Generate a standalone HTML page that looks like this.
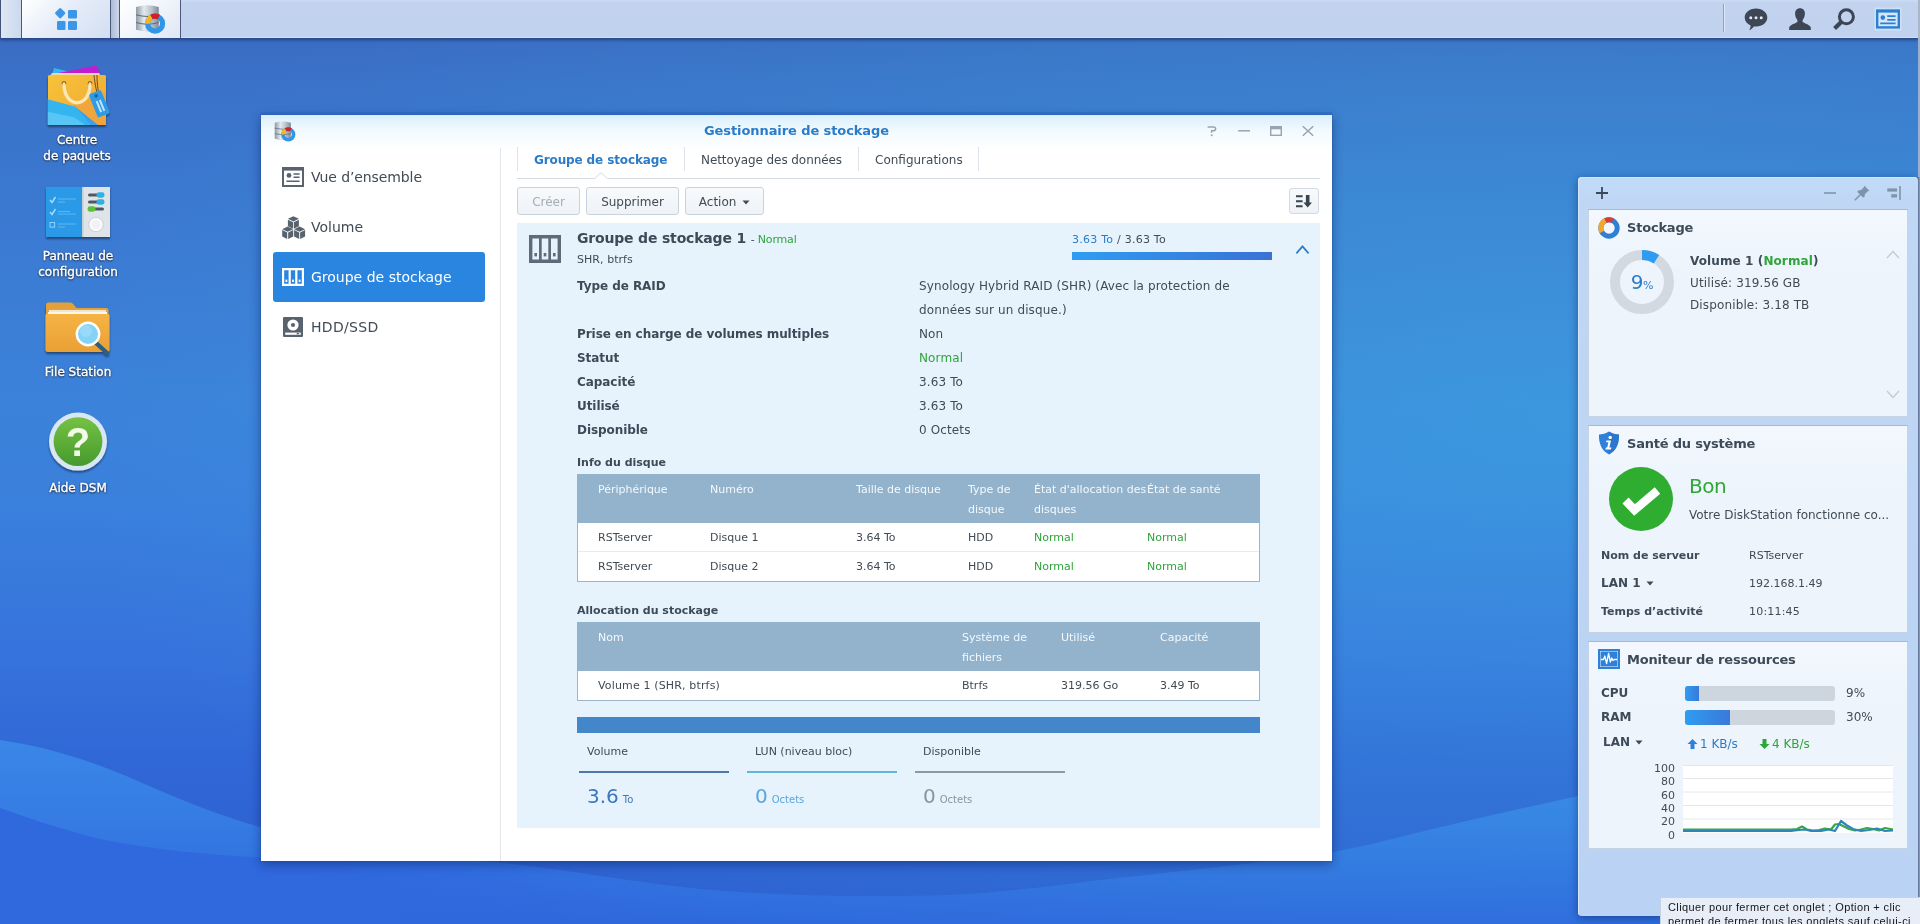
<!DOCTYPE html>
<html lang="fr">
<head>
<meta charset="utf-8">
<title>Synology DiskStation - Gestionnaire de stockage</title>
<style>
*{box-sizing:border-box;margin:0;padding:0}
html,body{width:1920px;height:924px;overflow:hidden}
#win,#wp,.dlabel,#tip{will-change:transform}
body{position:relative;font-family:"DejaVu Sans","Liberation Sans",sans-serif;font-size:12px;color:#414b55;background:#3570d4}
.abs{position:absolute}
#bg{position:absolute;left:0;top:0;width:1920px;height:924px}
/* taskbar */
#taskbar{position:absolute;left:0;top:0;width:1918px;height:39px;background:linear-gradient(#cddcf6 0,#c2d3ee 3px,#c0d2ee 100%);border-bottom:1px solid #2a4a8c;box-shadow:inset 0 -1px 0 #cfe0fa,0 1px 3px rgba(10,30,90,.55)}
#taskbar .tb{position:absolute;top:0;height:38px;border-left:1px solid #4a5a78;border-right:1px solid #4a5a78;background:linear-gradient(135deg,#ffffff 0%,#e6edf8 45%,#d3def2 100%)}
/* desktop icons */
.dlabel{position:absolute;width:140px;text-align:center;color:#fff;font-size:12px;line-height:16px;text-shadow:0 1px 2px rgba(0,0,0,.8),0 0 2px rgba(0,0,0,.55);-webkit-text-stroke:.35px #fff}
/* window */
#win{position:absolute;left:261px;top:115px;width:1071px;height:746px;background:#fff;box-shadow:0 -3px 0 rgba(40,100,190,.55),0 0 0 1px rgba(30,70,150,.25),0 3px 10px rgba(0,20,80,.45)}
#winhead{position:absolute;left:0;top:0;width:100%;height:36px;background:linear-gradient(#d9effc 0%,#f3fafe 45%,#ffffff 100%)}
#wintitle{position:absolute;left:0;top:7px;letter-spacing:-.09px;width:100%;text-align:center;font-weight:bold;font-size:13px;line-height:18px;color:#2b7cc8}
.side{position:absolute;left:12px;width:212px;height:50px;border-radius:3px;font-size:14px;line-height:50px;color:#414b55}
.side span{position:absolute;left:38px;top:0;white-space:nowrap}
.side svg{position:absolute;left:9px;top:14px}
.side.sel{background:#2a85e0;color:#fff}
.tab{position:absolute;top:36px;height:18px;line-height:18px;font-size:12px;white-space:nowrap;color:#414b55}
.tsep{position:absolute;top:32px;width:1px;height:24px;background:#dfe4ea}
.btn{position:absolute;top:72px;height:28px;border:1px solid #c9d3de;border-radius:3px;background:linear-gradient(#f8fafc,#eef2f6);font-size:12px;line-height:26px;padding-top:1px;text-align:center;color:#414b55;white-space:nowrap}
#panel{position:absolute;left:256px;top:108px;width:803px;height:605px;background:#e6f3fd}
.lbl{position:absolute;left:60px;font-weight:bold;font-size:12px;line-height:24px;white-space:nowrap;color:#3d4a58;letter-spacing:-.06px}
.val{position:absolute;left:402px;font-size:12px;line-height:24px;white-space:nowrap;color:#414b55;letter-spacing:.12px}
.green{color:#2fa43a}
.sect{position:absolute;left:60px;font-weight:bold;font-size:11px;line-height:16px;color:#3d4a58;white-space:nowrap}
.tbl{position:absolute;left:60px;width:683px;border:1px solid #9db5c9;background:#fff}
.th{position:absolute;left:-1px;top:-1px;width:683px;height:49px;background:#93b3cd}
.th span{position:absolute;margin-left:1px;top:6px;font-size:11px;line-height:20px;color:#f3f8fc;white-space:nowrap}
.tr{position:absolute;left:0;width:100%;height:29px}
.tr span{position:absolute;top:0;font-size:11px;line-height:29px;color:#414b55;white-space:nowrap}
.tr span.green{color:#2fa43a}
.leg{position:absolute;font-size:11px;line-height:16px;color:#414b55;white-space:nowrap}
.legline{position:absolute;top:663px;width:150px;height:2px}
.big{position:absolute;top:671px;font-size:20px;line-height:30px;white-space:nowrap}
.big small{font-size:10px;margin-left:4px}
/* widget panel */
#wp{position:absolute;left:1578px;top:177px;width:340px;height:739px;background:linear-gradient(#c0dbf8 0,#bfd6f4 30px,#bad2f3 100%);border-radius:4px;box-shadow:inset 1px 1px 0 #d6e6fa,0 2px 8px rgba(0,20,80,.45)}
.card{position:absolute;left:10px;width:320px;background:linear-gradient(#f3f8fe,#edf4fc 60px);border:1px solid #c5d3e3;border-top-color:#a9b8cb}
.ctitle{position:absolute;left:38px;top:9px;letter-spacing:-.2px;font-weight:bold;font-size:13px;line-height:18px;color:#3d4a58;white-space:nowrap}
.wl{position:absolute;font-weight:bold;font-size:11px;line-height:16px;color:#3d4a58;white-space:nowrap}
.wv{position:absolute;font-size:11px;line-height:16px;color:#414b55;white-space:nowrap}
.track{position:absolute;left:96px;width:150px;height:15px;border-radius:3px;background:#cdd5de;overflow:hidden}
.track i{display:block;height:15px;background:linear-gradient(90deg,#2f9cf2,#3a79d9)}
#tip{position:absolute;left:1660px;top:897px;width:262px;height:30px;background:#e7eef8;border:1px solid #c6d1e1;font-family:"Liberation Sans",sans-serif;font-size:11px;line-height:14px;color:#161616;padding:2px 0 0 7px;letter-spacing:.38px;white-space:nowrap}
</style>
</head>
<body>
<svg id="bg" width="1920" height="924" viewBox="0 0 1920 924">
<defs>
<linearGradient id="g0" gradientUnits="userSpaceOnUse" x1="0" y1="0" x2="0" y2="924">
<stop offset="0.041" stop-color="#3a6cc3"/><stop offset="0.092" stop-color="#3a72c9"/><stop offset="0.27" stop-color="#3b7bd3"/><stop offset="0.43" stop-color="#3b82da"/><stop offset="0.54" stop-color="#3a80dc"/><stop offset="0.71" stop-color="#3673dc"/><stop offset="0.835" stop-color="#3066d6"/><stop offset="1" stop-color="#2d5fd0"/>
</linearGradient>
<radialGradient id="gr" gradientUnits="userSpaceOnUse" cx="1560" cy="420" r="1" gradientTransform="translate(1560 420) scale(1500 700) translate(-1560 -420)">
<stop offset="0" stop-color="#40c8e6" stop-opacity=".3"/><stop offset="1" stop-color="#40c8e6" stop-opacity="0"/>
</radialGradient>
<linearGradient id="g1" gradientUnits="userSpaceOnUse" x1="0" y1="740" x2="0" y2="924">
<stop offset="0" stop-color="#3a87e7"/><stop offset=".45" stop-color="#357be3"/><stop offset="1" stop-color="#2e66dc"/>
</linearGradient>
<linearGradient id="g2" gradientUnits="userSpaceOnUse" x1="0" y1="0" x2="700" y2="0">
<stop offset="0" stop-color="#3068de" stop-opacity="1"/><stop offset=".45" stop-color="#3068de" stop-opacity="1"/><stop offset="1" stop-color="#3068de" stop-opacity="0"/>
</linearGradient>
</defs>
<rect width="1920" height="924" fill="url(#g0)"/>
<path d="M0 740 C50 747 100 764 140 782 C185 802 225 817 260 827 C340 848 420 856 491 862 C570 870 630 882 700 889 C790 897 880 897 950 895 C1010 892 1060 885 1100 880 C1190 870 1270 862 1332 852 C1360 847 1380 842 1400 837 C1460 822 1520 809 1578 796 C1700 768 1820 740 1920 710 L1920 924 L0 924 Z" fill="url(#g1)"/>
<path d="M0 808 C40 822 70 832 105 840 C160 851 215 855 260 857.500 C330 861 420 862 491 863 C570 871 630 883 700 890 L700 924 L0 924 Z" fill="url(#g2)"/>
<rect width="1920" height="924" fill="url(#gr)"/>
</svg>
<div id="taskbar">
<div class="abs" style="left:0;top:0;width:1px;height:38px;background:#44537a"></div>
<div class="abs" style="left:1px;top:0;width:20px;height:38px;background:linear-gradient(90deg,#dfe7f5,#cbd8ee)"></div>
<div class="tb" style="left:21px;width:90px"></div>
<div class="abs" style="left:111px;top:0;width:8px;height:38px;background:linear-gradient(90deg,#aebbd6,#ccd7ec)"></div>
<div class="tb" style="left:119px;width:62px;background:linear-gradient(135deg,#ffffff 0%,#f0f4fb 50%,#dfe7f5 100%)"></div>
<svg class="abs" style="left:54px;top:7px" width="24" height="24" viewBox="0 0 24 24" fill="#3a96e8">
<rect x="2.2" y="2.2" width="8" height="8" rx="1.3" transform="rotate(45 6.2 6.2)"/>
<rect x="14" y="3" width="9" height="8.5" rx="1.3"/>
<rect x="3" y="14" width="8.5" height="9" rx="1.3"/>
<rect x="14" y="14" width="9" height="9" rx="1.3"/>
</svg>
<svg class="abs" style="left:135px;top:5px" width="31" height="29" viewBox="0 0 30 28">
<defs><linearGradient id="cy31" x1="0" y1="0" x2="1" y2="0"><stop offset="0" stop-color="#8d9aa6"/><stop offset=".35" stop-color="#e3e9ee"/><stop offset=".7" stop-color="#b5c0ca"/><stop offset="1" stop-color="#7e8b97"/></linearGradient></defs>
<path d="M1 2 Q12 -1.5 23 2 L23 24 Q12 27.5 1 24 Z" fill="url(#cy31)"/>
<path d="M1 9.5 Q12 12.5 23 9.5 M1 17 Q12 20 23 17" stroke="#5f6c78" stroke-width="1" fill="none"/>
<circle cx="19.5" cy="18" r="7.2" fill="none" stroke="#2f96e8" stroke-width="5"/>
<path d="M19.5 18 m-9.7 0 a9.7 9.7 0 0 1 5.2 -8.6 l2.2 4.4 a4.7 4.7 0 0 0 -2.6 4.2 z" fill="#f6b61e"/>
<path d="M14.8 9.5 a9.7 9.7 0 0 1 9.4 0 l-2.4 4.3 a4.7 4.7 0 0 0 -4.6 0 z" fill="#d0202a"/>
</svg>
<div class="abs" style="left:1723px;top:4px;width:1px;height:28px;background:#8fa2c4"></div>
<div class="abs" style="left:1724px;top:4px;width:1px;height:28px;background:#dbe6f6"></div>
<svg class="abs" style="left:1744px;top:8px" width="24" height="23" viewBox="0 0 24 23"><path d="M12 0.5 C18.4 0.5 23.3 4.6 23.3 9.6 C23.3 14.6 18.4 18.6 12 18.6 C11.2 18.6 10.5 18.5 9.8 18.4 C8.6 20.2 6.8 21.6 5.2 22.2 C6.2 20.8 6.7 18.9 6.6 17.5 C3 15.9 0.7 13 0.7 9.6 C0.7 4.6 5.6 0.5 12 0.5 Z" fill="#3c4654"/><circle cx="6.8" cy="9.8" r="1.5" fill="#e4ecf6"/><circle cx="12" cy="9.8" r="1.5" fill="#e4ecf6"/><circle cx="17.2" cy="9.8" r="1.5" fill="#e4ecf6"/></svg>
<svg class="abs" style="left:1788px;top:8px" width="24" height="23" viewBox="0 0 24 23"><path d="M12 0.3 C15 0.3 16.9 2.4 16.9 5.6 C16.9 8.6 15.9 10.6 14.6 11.9 L14.6 14 C17 15.6 22 16.6 22.8 19.6 L22.8 22 L1.2 22 L1.2 19.6 C2 16.6 7 15.6 9.4 14 L9.4 11.9 C8.1 10.6 7.1 8.6 7.1 5.6 C7.1 2.4 9 0.3 12 0.3 Z" fill="#3c4654"/></svg>
<svg class="abs" style="left:1832px;top:8px" width="24" height="23" viewBox="0 0 24 23"><circle cx="14.4" cy="8.8" r="7" fill="none" stroke="#3c4654" stroke-width="3"/><path d="M9.2 14 L2.6 20.6" stroke="#3c4654" stroke-width="4.2" stroke-linecap="butt"/></svg>
<svg class="abs" style="left:1874px;top:7px" width="28" height="24" viewBox="0 0 28 24"><rect x="0.5" y="0.5" width="27" height="23" fill="#d9ecfd" opacity=".55"/><rect x="3.2" y="3.8" width="21.6" height="16.6" fill="#d3e8fc" stroke="#2f7fd0" stroke-width="2.4"/><rect x="2" y="2.6" width="24" height="3" fill="#2f7fd0"/><circle cx="8.8" cy="10.6" r="2.3" fill="#2f7fd0"/><path d="M13.2 9.2 H21.6 M13.2 12.8 H21.6 M6.2 16.4 H21.6" stroke="#2f7fd0" stroke-width="1.7"/></svg>
</div>
<!-- Package Center -->
<svg class="abs" style="left:44px;top:62px" width="70" height="68" viewBox="0 0 70 68">
<defs>
<linearGradient id="bagy" x1="0" y1="0" x2="1" y2="1"><stop offset="0" stop-color="#f7c33a"/><stop offset="1" stop-color="#f0a733"/></linearGradient>
<filter id="ds1" x="-20%" y="-20%" width="140%" height="150%"><feGaussianBlur in="SourceAlpha" stdDeviation="1"/><feOffset dy="1.5"/><feComponentTransfer><feFuncA type="linear" slope=".45"/></feComponentTransfer><feMerge><feMergeNode/><feMergeNode in="SourceGraphic"/></feMerge></filter>
</defs>
<g filter="url(#ds1)">
<path d="M10 6 L27 10 L24 16 L8 13 Z" fill="#35b5f2"/>
<path d="M14 11 L50 4 Q53 3.5 54 6 L56 13 L16 17 Z" fill="#c21fd0"/>
<path d="M8 11 L55 11 L57 14 L6 14 Z" fill="#e9d9a8"/>
<rect x="4" y="13" width="58" height="50" rx="1.5" fill="url(#bagy)"/>
<path d="M27.9 43.8 L62.0 29.6 L62.0 63.1 L48.7 63.1 Z" fill="#f0a340" opacity=".8"/><path d="M3.9 37.4 L31.8 45.1 L53.9 63.1 L3.9 63.1 Z" fill="#3a9fec"/><path d="M3.9 37.4 L31.8 45.1 L46.8 63.1 L3.9 63.1 Z" fill="#35b5f0"/><path d="M3.9 49.7 L30.5 55.5 L40.9 63.1 L3.9 63.1 Z" fill="#58c6f5"/><circle cx="20" cy="21.5" r="2.3" fill="#7a4a12"/><circle cx="46" cy="21.5" r="2.3" fill="#7a4a12"/>
<path d="M20 22 C20 47 46 47 46 22" fill="none" stroke="#fbe6b8" stroke-width="3.4" stroke-linecap="round"/>
<path d="M50 13 C51 22 52 28 54 33 M53 13 C53 22 54 28 55 32" fill="none" stroke="#6b4a2a" stroke-width="1"/>
<g transform="rotate(-22 56 42)"><rect x="49" y="29" width="13" height="25" rx="2" fill="#2f9be6"/><circle cx="55.5" cy="33" r="1.7" fill="#1d5e9c"/><rect x="53" y="38" width="2" height="12" fill="#bfe3fb"/><rect x="56.4" y="38" width="2" height="12" fill="#bfe3fb"/></g>
</g>
</svg>
<div class="dlabel" style="left:7px;top:132px">Centre<br>de paquets</div>
<!-- Control panel -->
<svg class="abs" style="left:43px;top:184px" width="70" height="58" viewBox="0 0 70 58">
<g filter="url(#ds1)">
<rect x="3" y="3" width="36" height="50" fill="#2c99e8"/>
<rect x="39" y="3" width="28" height="50" fill="#dfe4e9"/>
<rect x="39" y="3" width="1.5" height="50" fill="#c4ccd4"/>
<path d="M7 16 L9 18.5 L12.5 13" stroke="#a9dcfb" stroke-width="1.4" fill="none"/>
<path d="M7 28 L9 30.5 L12.5 25" stroke="#a9dcfb" stroke-width="1.4" fill="none"/>
<rect x="7" y="38.5" width="4.6" height="4.6" fill="none" stroke="#8fd0f8" stroke-width="1"/>
<path d="M15 15 H33 M15 18 H22 M15 27.5 H27 M15 30 H33 M15 40 H33 M15 43 H22" stroke="#5db8f2" stroke-width="1.2"/>
<rect x="45" y="9.5" width="16" height="3" rx="1.5" fill="#4d5964"/><rect x="53.5" y="8.3" width="8" height="5.4" rx="2.4" fill="#2fb2e6"/>
<rect x="45" y="16.5" width="16" height="3" rx="1.5" fill="#4d5964"/><rect x="53.5" y="15.3" width="8" height="5.4" rx="2.4" fill="#2fb2e6"/>
<rect x="45" y="23.5" width="16" height="3" rx="1.5" fill="#4d5964"/><rect x="44.5" y="22.3" width="8" height="5.4" rx="2.4" fill="#5cc23a"/>
<circle cx="53" cy="40.5" r="7.2" fill="#fafbfc" stroke="#c9d0d8" stroke-width="1"/>
<circle cx="53" cy="40.5" r="4.6" fill="#f0f2f5"/>
</g>
</svg>
<div class="dlabel" style="left:8px;top:248px">Panneau de<br>configuration</div>
<!-- File Station -->
<svg class="abs" style="left:42px;top:298px" width="72" height="60" viewBox="0 0 72 60">
<defs><linearGradient id="fold" x1="0" y1="0" x2="0" y2="1"><stop offset="0" stop-color="#f6b445"/><stop offset="1" stop-color="#e99f36"/></linearGradient></defs>
<g filter="url(#ds1)">
<path d="M4 7 Q4 4.5 6.5 4.5 L28 4.5 Q30 4.5 31.2 6 L34.5 10 L64 10 Q66.5 10 66.5 12.5 L66.5 20 L4 20 Z" fill="#e3a13a"/>
<rect x="7" y="12" width="57" height="6" fill="#f1e6cf"/>
<rect x="6" y="14" width="59" height="6" fill="#fbf6ea"/>
<path d="M3.5 17.5 Q3.5 16 5 16 L66 16 Q67.5 16 67.5 17.5 L67.5 51.5 Q67.5 54 65 54 L6 54 Q3.5 54 3.5 51.5 Z" fill="url(#fold)"/>
<path d="M53 44 L65 55" stroke="#2d5f80" stroke-width="4.4" stroke-linecap="round"/>
<circle cx="46" cy="36" r="11.2" fill="#84d2f6" stroke="#fdfdfb" stroke-width="2.4"/>
<circle cx="44" cy="33" r="6" fill="#a6e0fa" opacity=".6"/>
</g>
</svg>
<div class="dlabel" style="left:8px;top:364px">File Station</div>
<!-- Help -->
<svg class="abs" style="left:46px;top:410px" width="64" height="66" viewBox="0 0 64 66">
<defs><linearGradient id="hg" x1="0" y1="0" x2="0" y2="1"><stop offset="0" stop-color="#74c244"/><stop offset="1" stop-color="#479a2d"/></linearGradient></defs>
<g filter="url(#ds1)">
<circle cx="32" cy="31.6" r="29" fill="#d9e6f3"/>
<circle cx="32" cy="31.6" r="24.4" fill="url(#hg)"/>
<text x="32" y="46" text-anchor="middle" font-family="Liberation Sans,sans-serif" font-weight="bold" font-size="40" fill="#f3fbe8">?</text>
</g>
</svg>
<div class="dlabel" style="left:8px;top:480px">Aide DSM</div>
<div id="win">
<div id="winhead"></div>
<svg class="abs" style="left:13px;top:6px"  width="22" height="21" viewBox="0 0 30 28">
<defs><linearGradient id="cy22" x1="0" y1="0" x2="1" y2="0"><stop offset="0" stop-color="#8d9aa6"/><stop offset=".35" stop-color="#e3e9ee"/><stop offset=".7" stop-color="#b5c0ca"/><stop offset="1" stop-color="#7e8b97"/></linearGradient></defs>
<path d="M1 2 Q12 -1.5 23 2 L23 24 Q12 27.5 1 24 Z" fill="url(#cy22)"/>
<path d="M1 9.5 Q12 12.5 23 9.5 M1 17 Q12 20 23 17" stroke="#5f6c78" stroke-width="1" fill="none"/>
<circle cx="19.5" cy="18" r="7.2" fill="none" stroke="#2f96e8" stroke-width="5"/>
<path d="M19.5 18 m-9.7 0 a9.7 9.7 0 0 1 5.2 -8.6 l2.2 4.4 a4.7 4.7 0 0 0 -2.6 4.2 z" fill="#f6b61e"/>
<path d="M14.8 9.5 a9.7 9.7 0 0 1 9.4 0 l-2.4 4.3 a4.7 4.7 0 0 0 -4.6 0 z" fill="#d0202a"/>
</svg>
<div id="wintitle">Gestionnaire de stockage</div>
<!-- window controls -->
<svg class="abs" style="left:944px;top:9px" width="14" height="14" viewBox="0 0 14 14"><path d="M2.6 2.9 H8.6 Q10.6 2.9 10.6 4.8 Q10.6 6.7 8.6 6.7 H6.6 V8.8" fill="none" stroke="#9aa3af" stroke-width="1.5"/><rect x="5.800" y="10.400" width="1.700" height="1.700" fill="#9aa3af"/></svg>
<svg class="abs" style="left:976px;top:9px" width="14" height="14" viewBox="0 0 14 14"><path d="M1.200 6.800 H13" stroke="#9aa3af" stroke-width="1.500"/></svg>
<svg class="abs" style="left:1008px;top:9px" width="14" height="14" viewBox="0 0 14 14"><rect x="1.700" y="2.700" width="10.600" height="8.600" fill="none" stroke="#9aa3af" stroke-width="1.400"/><path d="M1.700 3.800 H12.300" stroke="#9aa3af" stroke-width="3"/></svg>
<svg class="abs" style="left:1040px;top:9px" width="14" height="14" viewBox="0 0 14 14"><path d="M1.800 2.300 L12.200 11.700 M12.200 2.300 L1.800 11.700" stroke="#9aa3af" stroke-width="1.500"/></svg>
<!-- sidebar -->
<div class="abs" style="left:239px;top:33px;width:1px;height:713px;background:#e3e7ec"></div>
<div class="side" style="top:37px"><svg width="22" height="22" viewBox="0 0 22 22"><rect x="1" y="2" width="20" height="18" fill="none" stroke="#58636e" stroke-width="2"/><rect x="1" y="2" width="20" height="2.6" fill="#58636e"/><circle cx="7" cy="9.4" r="2.4" fill="#58636e"/><path d="M11.5 8 H17.6 M11.5 11.2 H17.6 M4.4 15.2 H17.6" stroke="#58636e" stroke-width="1.6"/></svg><span style="letter-spacing:-.1px">Vue d’ensemble</span></div>
<div class="side" style="top:87px"><svg width="24" height="24" viewBox="0 0 24 24" style="left:9px;top:14px"><g fill="#58636e"><path d="M11.4 0.2 L16.9 2.8 L11.4 5.4 L5.9 2.8 Z"/><path d="M5.9 3.7 L11.0 6.2 L11.0 12.7 L5.9 10.2 Z"/><path d="M16.9 3.7 L11.8 6.2 L11.8 12.7 L16.9 10.2 Z"/><path d="M5.7 10.6 L11.2 13.2 L5.7 15.8 L0.2 13.2 Z"/><path d="M0.2 14.1 L5.2 16.6 L5.2 23.1 L0.2 20.6 Z"/><path d="M11.2 14.1 L6.2 16.6 L6.2 23.1 L11.2 20.6 Z"/><path d="M17.6 10.6 L23.1 13.2 L17.6 15.8 L12.1 13.2 Z"/><path d="M12.1 14.1 L17.2 16.6 L17.2 23.1 L12.1 20.6 Z"/><path d="M23.1 14.1 L18.1 16.6 L18.1 23.1 L23.1 20.6 Z"/></g></svg><span>Volume</span></div>
<div class="side sel" style="top:137px"><svg width="22" height="22" viewBox="0 0 22 22"><path d="M0 2 H22 V20 H0 Z M2.2 4.2 V17.8 H6.6 V4.2 Z M8.8 4.2 V17.8 H13.2 V4.2 Z M15.4 4.2 V17.8 H19.8 V4.2 Z" fill="#fff" fill-rule="evenodd"/><rect x="3.5" y="13.6" width="1.8" height="2.4" fill="#fff"/><rect x="10.1" y="13.6" width="1.8" height="2.4" fill="#fff"/><rect x="16.7" y="13.6" width="1.8" height="2.4" fill="#fff"/></svg><span>Groupe de stockage</span></div>
<div class="side" style="top:187px"><svg width="22" height="22" viewBox="0 0 22 22"><path d="M2 1 H20 Q21 1 21 2 V20 Q21 21 20 21 H2 Q1 21 1 20 V2 Q1 1 2 1 Z" fill="#58636e"/><circle cx="11" cy="9" r="5.6" fill="#fff"/><circle cx="11" cy="9" r="2.1" fill="#58636e"/><rect x="3.2" y="16.6" width="15.6" height="2.2" fill="#fff"/><rect x="14.6" y="17.1" width="2.6" height="1.2" fill="#58636e"/></svg><span style="letter-spacing:.3px">HDD/SSD</span></div>
<!-- tabs -->
<div class="tsep" style="left:256px"></div>
<div class="tab" style="left:273px;font-weight:bold;color:#2b7cc8;letter-spacing:-.12px">Groupe de stockage</div>
<div class="tsep" style="left:423px"></div>
<div class="tab" style="left:440px;letter-spacing:-.08px">Nettoyage des données</div>
<div class="tsep" style="left:597px"></div>
<div class="tab" style="left:614px">Configurations</div>
<div class="tsep" style="left:717px"></div>
<div class="abs" style="left:256px;top:63px;width:803px;height:1px;background:#d5dae0"></div>
<svg class="abs" style="left:331px;top:57px" width="18" height="8" viewBox="0 0 18 8"><path d="M2 7 L9 0.8 L16 7" fill="#fff" stroke="#d5dae0" stroke-width="1"/><path d="M2.8 7.2 H15.2" stroke="#fff" stroke-width="1.6"/></svg>
<!-- toolbar -->
<div class="btn" style="left:256px;width:63px;color:#a5adb6">Créer</div>
<div class="btn" style="left:325px;width:93px">Supprimer</div>
<div class="btn" style="left:424px;width:79px">Action <svg width="8" height="5" viewBox="0 0 8 5" style="margin-left:2px;vertical-align:1px"><path d="M0.5 0.5 H7.5 L4 4.5 Z" fill="#414b55"/></svg></div>
<div class="btn" style="left:1028px;width:30px;top:73px;height:26px;border-color:#d3dae3"></div>
<svg class="abs" style="left:1034px;top:78px" width="18" height="16" viewBox="0 0 18 16"><path d="M1 3.200 H7.600 M1 8.200 H7.600 M1 13.200 H7.600" stroke="#3a444f" stroke-width="2"/><path d="M10.900 2 V9.400 H8.400 L12.700 14.600 L17 9.400 H14.500 V2 Z" fill="#3a444f"/></svg>
<div id="panel">
<svg class="abs" style="left:12px;top:12px" width="32" height="28" viewBox="0 0 32 28"><path d="M0 0 H32 V28 H0 Z M3.4 3.4 V24.6 H10 V3.4 Z M12.7 3.4 V24.6 H19.3 V3.4 Z M22 3.4 V24.6 H28.6 V3.4 Z" fill="#5f6b78" fill-rule="evenodd"/><rect x="5.4" y="18" width="2.6" height="3.4" fill="#5f6b78"/><rect x="14.7" y="18" width="2.6" height="3.4" fill="#5f6b78"/><rect x="24" y="18" width="2.6" height="3.4" fill="#5f6b78"/></svg>
<div class="abs" style="left:60px;top:5px;font-weight:bold;font-size:14px;line-height:20px;color:#3d4a58;white-space:nowrap;letter-spacing:-.18px">Groupe de stockage 1 <span style="font-weight:normal;font-size:11px;color:#414b55">- <span class="green">Normal</span></span></div>
<div class="abs" style="left:60px;top:29px;font-size:11px;line-height:16px;white-space:nowrap;letter-spacing:.05px">SHR, btrfs</div>
<div class="abs" style="left:555px;top:9px;font-size:11px;line-height:16px;white-space:nowrap;letter-spacing:.24px"><span style="color:#2b7cc8">3.63 To</span> / 3.63 To</div>
<div class="abs" style="left:555px;top:29px;width:200px;height:8px;background:linear-gradient(90deg,#2f9cf2,#3a72d4)"></div>
<svg class="abs" style="left:778px;top:21px" width="15" height="11" viewBox="0 0 15 11"><path d="M1.4 9.4 L7.5 2.4 L13.6 9.4" fill="none" stroke="#2b7cc8" stroke-width="1.7"/></svg>
<div class="lbl" style="top:51px">Type de RAID</div><div class="val " style="top:51px">Synology Hybrid RAID (SHR) (Avec la protection de</div><div class="val " style="top:75px">données sur un disque.)</div><div class="lbl" style="top:99px">Prise en charge de volumes multiples</div><div class="val " style="top:99px">Non</div><div class="lbl" style="top:123px">Statut</div><div class="val green" style="top:123px">Normal</div><div class="lbl" style="top:147px">Capacité</div><div class="val " style="top:147px">3.63 To</div><div class="lbl" style="top:171px">Utilisé</div><div class="val " style="top:171px">3.63 To</div><div class="lbl" style="top:195px">Disponible</div><div class="val " style="top:195px">0 Octets</div>
<div class="sect" style="top:232px">Info du disque</div>
<div class="tbl" style="top:251px;height:108px">
<div class="th"><span style="left:20px">Périphérique</span><span style="left:132px">Numéro</span><span style="left:278px">Taille de disque</span><span style="left:390px">Type de<br>disque</span><span style="left:456px">État d'allocation des<br>disques</span><span style="left:569px">État de santé</span></div>
<div class="tr" style="top:48px;border-bottom:1px solid #e6ebf0"><span style="left:20px">RSTserver</span><span style="left:132px">Disque 1</span><span style="left:278px">3.64 To</span><span style="left:390px">HDD</span><span class="green" style="left:456px">Normal</span><span class="green" style="left:569px">Normal</span></div>
<div class="tr" style="top:77px"><span style="left:20px">RSTserver</span><span style="left:132px">Disque 2</span><span style="left:278px">3.64 To</span><span style="left:390px">HDD</span><span class="green" style="left:456px">Normal</span><span class="green" style="left:569px">Normal</span></div>
</div>
<div class="sect" style="top:380px">Allocation du stockage</div>
<div class="tbl" style="top:399px;height:79px">
<div class="th"><span style="left:20px">Nom</span><span style="left:384px">Système de<br>fichiers</span><span style="left:483px">Utilisé</span><span style="left:582px">Capacité</span></div>
<div class="tr" style="top:48px"><span style="left:20px;letter-spacing:.15px">Volume 1 (SHR, btrfs)</span><span style="left:384px">Btrfs</span><span style="left:483px">319.56 Go</span><span style="left:582px">3.49 To</span></div>
</div>
<div class="abs" style="left:60px;top:494px;width:683px;height:16px;background:#4386c9"></div>
<div class="leg" style="left:70px;top:521px">Volume</div>
<div class="leg" style="left:238px;top:521px">LUN (niveau bloc)</div>
<div class="leg" style="left:406px;top:521px">Disponible</div>
<div class="legline" style="left:62px;top:548px;background:#4b7aa8"></div>
<div class="legline" style="left:230px;top:548px;background:#62b6d6"></div>
<div class="legline" style="left:398px;top:548px;background:#8f989f"></div>
<div class="big" style="left:70px;top:558px;color:#3c78ba">3.6<small>To</small></div>
<div class="big" style="left:238px;top:558px;color:#59a6da">0<small>Octets</small></div>
<div class="big" style="left:406px;top:558px;color:#8a949e">0<small>Octets</small></div>
</div>
</div>
<div id="wp">
<svg class="abs" style="left:17px;top:9px" width="14" height="14" viewBox="0 0 14 14"><path d="M7 1 V13 M1 7 H13" stroke="#3d4856" stroke-width="1.8"/></svg>
<svg class="abs" style="left:245px;top:9px" width="14" height="14" viewBox="0 0 14 14"><path d="M1 7 H13" stroke="#8193ab" stroke-width="1.6"/></svg>
<svg class="abs" style="left:276px;top:8px" width="16" height="16" viewBox="0 0 16 16"><path d="M10.4 0.8 L15.2 5.6 L13.6 6.4 L11 9 L10.4 12 L9 12.600 L3.400 7 L4 5.600 L7 5 L9.600 2.400 Z" fill="#8193ab"/><path d="M6.200 9.800 L0.800 15.200" stroke="#8193ab" stroke-width="1.500"/></svg>
<svg class="abs" style="left:308px;top:8px" width="16" height="16" viewBox="0 0 16 16"><rect x="1.300" y="3.400" width="9.700" height="3.200" fill="#8193ab"/><rect x="5.200" y="9.200" width="5.800" height="3.300" fill="#8193ab"/><path d="M14 1 V15" stroke="#8193ab" stroke-width="1.600"/></svg>
<!-- card 1 -->
<div class="card" style="top:32px;height:208px">
<svg class="abs" style="left:8px;top:6px" width="24" height="24" viewBox="-12 -12 24 24"><circle r="8.2" fill="none" stroke="#2f7fd6" stroke-width="5"/><path d="M-7.10 4.10 A8.2 8.2 0 0 1 -3.47 -7.43" fill="none" stroke="#f3a72c" stroke-width="5"/><path d="M-3.47 -7.43 A8.2 8.2 0 0 1 3.47 -7.43" fill="none" stroke="#dc3b33" stroke-width="5"/></svg>
<div class="ctitle">Stockage</div>
<svg class="abs" style="left:19px;top:38px" width="68" height="68" viewBox="-34 -34 68 68"><circle r="27" fill="none" stroke="#d2d9e1" stroke-width="10"/><path d="M0.00 -27.00 A27 27 0 0 1 14.47 -22.80" fill="none" stroke="#2f9cf2" stroke-width="10"/></svg>
<div class="abs" style="left:19px;top:58px;width:68px;text-align:center;font-size:20px;line-height:28px;color:#2b7cc8;white-space:nowrap;letter-spacing:-.5px">9<span style="font-size:11px;letter-spacing:0">%</span></div>
<div class="abs" style="left:101px;top:42px;font-weight:bold;font-size:12px;line-height:18px;color:#3d4a58;white-space:nowrap;letter-spacing:.1px">Volume 1 (<span style="color:#2fa43a">Normal</span>)</div>
<div class="abs" style="left:101px;top:64px;font-size:12px;line-height:18px;white-space:nowrap;letter-spacing:.13px">Utilisé: 319.56 GB</div>
<div class="abs" style="left:101px;top:86px;font-size:12px;line-height:18px;white-space:nowrap;letter-spacing:.13px">Disponible: 3.18 TB</div>
<svg class="abs" style="left:297px;top:40px" width="14" height="9" viewBox="0 0 14 9"><path d="M1 8 L7 1.6 L13 8" fill="none" stroke="#c3cbd6" stroke-width="1.4"/></svg>
<svg class="abs" style="left:297px;top:180px" width="14" height="9" viewBox="0 0 14 9"><path d="M1 1 L7 7.4 L13 1" fill="none" stroke="#c3cbd6" stroke-width="1.4"/></svg>
</div>
<!-- card 2 -->
<div class="card" style="top:248px;height:208px">
<svg class="abs" style="left:9px;top:5px" width="22" height="24" viewBox="0 0 22 24"><path d="M11 0.6 C14 2.6 17.6 3.4 21 3.4 C21.4 12 18.6 19.4 11 23.4 C3.400 19.4 0.6 12 1 3.4 C4.4 3.4 8 2.6 11 0.6 Z" fill="#2f80d8"/><path d="M11 0.6 C14 2.6 17.6 3.4 21 3.4 C21.4 12 18.6 19.4 11 23.4 Z" fill="#2a6fc4" opacity=".55"/><circle cx="12.2" cy="6.4" r="1.7" fill="#fff"/><path d="M8.4 9.4 H13 L11.4 16.6 H13.4 L13 18.4 H7.4 L7.8 16.6 H9.2 L10.4 11.2 H8 Z" fill="#fff"/></svg>
<div class="ctitle">Santé du système</div>
<svg class="abs" style="left:19px;top:40px" width="66" height="66" viewBox="-33 -33 66 66"><circle r="32" fill="#2fad31"/><path d="M-15.500 1.500 L-6.500 11 L16.500 -8.500" fill="none" stroke="#fff" stroke-width="8.4"/></svg>
<div class="abs" style="left:100px;top:46px;font-size:20px;line-height:28px;color:#2fa736;white-space:nowrap;letter-spacing:-.5px">Bon</div>
<div class="abs" style="left:100px;top:80px;font-size:12px;line-height:18px;white-space:nowrap">Votre DiskStation fonctionne co...</div>
<div class="wl" style="left:12px;top:122px">Nom de serveur</div><div class="wv" style="left:160px;top:122px">RSTserver</div>
<div class="wl" style="left:12px;top:149px;font-size:12px">LAN 1 <svg width="8" height="5" viewBox="0 0 8 5" style="vertical-align:1px;margin-left:1px"><path d="M0.500 0.500 H7.500 L4 4.500 Z" fill="#3d4a58"/></svg></div><div class="wv" style="left:160px;top:150px">192.168.1.49</div>
<div class="wl" style="left:12px;top:178px">Temps d’activité</div><div class="wv" style="left:160px;top:178px;letter-spacing:.2px">10:11:45</div>
</div>
<!-- card 3 -->
<div class="card" style="top:464px;height:208px">
<svg class="abs" style="left:9px;top:7px" width="22" height="20" viewBox="0 0 22 20"><rect x="1" y="1" width="20" height="18" fill="#cfe6fb" stroke="#2f80d8" stroke-width="2"/><rect x="2.600" y="2.600" width="16.800" height="14.800" fill="#2f80d8"/><path d="M3 10.500 H5.500 L6.800 7 L8.600 14.500 L10.600 4.500 L12.400 13 L13.800 9 L15 11.500 L16.200 10.500 H19" fill="none" stroke="#fff" stroke-width="1.300" stroke-linejoin="round"/></svg>
<div class="ctitle">Moniteur de ressources</div>
<div class="wl" style="left:12px;top:43px;font-size:12px">CPU</div><div class="track" style="top:44px"><i style="width:14px"></i></div><div class="wv" style="left:257px;top:43px;font-size:12px">9%</div>
<div class="wl" style="left:12px;top:67px;font-size:12px">RAM</div><div class="track" style="top:68px"><i style="width:45px"></i></div><div class="wv" style="left:257px;top:67px;font-size:12px">30%</div>
<div class="wl" style="left:14px;top:92px;font-size:12px">LAN <svg width="8" height="5" viewBox="0 0 8 5" style="vertical-align:1px;margin-left:1px"><path d="M0.500 0.500 H7.500 L4 4.500 Z" fill="#3d4a58"/></svg></div>
<div class="wv" style="left:98px;top:94px;font-size:12px;color:#2b7cc8"><svg width="11" height="10" viewBox="0 0 11 10" style="vertical-align:-1px;margin-right:2px"><path d="M5.500 0 L10.500 5 H7.500 V10 H3.500 V5 H0.500 Z" fill="#2f80d8"/></svg>1 KB/s</div>
<div class="wv" style="left:170px;top:94px;font-size:12px;color:#2fa43a"><svg width="11" height="10" viewBox="0 0 11 10" style="vertical-align:-1px;margin-right:2px"><path d="M5.500 10 L10.500 5 H7.500 V0 H3.500 V5 H0.500 Z" fill="#2fa43a"/></svg>4 KB/s</div>
<svg class="abs" style="left:60px;top:118px" width="250" height="82" viewBox="0 0 250 82" font-family="DejaVu Sans,Liberation Sans,sans-serif" font-size="11" fill="#414b55">
<rect x="34" y="5" width="210" height="68" fill="#fff"/>
<path d="M34 5.500 H244 M34 18.500 H244 M34 32 H244 M34 45.500 H244 M34 59 H244" stroke="#e4e8ed" stroke-width="1"/>
<text x="26" y="12" text-anchor="end">100</text><text x="26" y="25" text-anchor="end">80</text><text x="26" y="38.500" text-anchor="end">60</text><text x="26" y="52" text-anchor="end">40</text><text x="26" y="65" text-anchor="end">20</text><text x="26" y="79" text-anchor="end">0</text>
<path d="M34 69.500 H142 L148 69 L153 66.500 L158 69.500 L164 70.500 L170 70 L176 68.500 L182 69.500 L186 64.500 L190 64 L194 66 L200 69 L206 70.500 L212 69.500 L218 68 L224 69 L230 70.500 L236 68 L244 69.500" fill="none" stroke="#3aa648" stroke-width="2.2" stroke-linejoin="round"/>
<path d="M34 71 H142 L150 70 L156 69.500 L162 71 L172 71 L180 69.500 L186 71 L192 61 L198 65.500 L204 69 L212 71 L220 70 L228 68.500 L236 71 L244 70.500" fill="none" stroke="#2e86b8" stroke-width="2.2" stroke-linejoin="round"/>
</svg>
</div>
</div>
<div class="abs" style="left:1918px;top:0;width:2px;height:924px;background:#9bb0cf"></div><div class="abs" style="left:1918px;top:0;width:2px;height:39px;background:#aab6ca"></div><div class="abs" style="left:1918px;top:177px;width:2px;height:739px;background:linear-gradient(90deg,#5a6c8e,#8fa3c2)"></div><div id="tip">Cliquer pour fermer cet onglet ; Option + clic<br>permet de fermer tous les onglets sauf celui-ci</div>

</body>
</html>
